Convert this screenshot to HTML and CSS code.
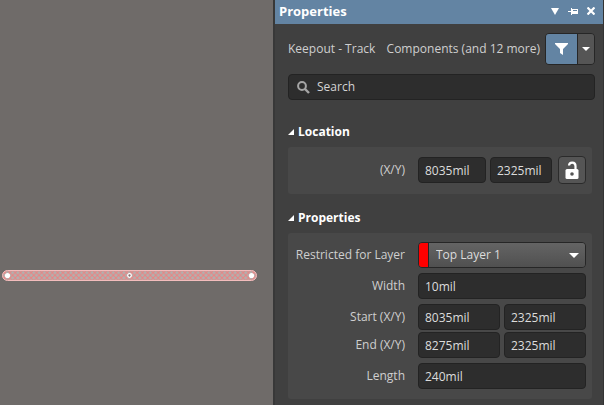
FILE: index.html
```
<!DOCTYPE html>
<html lang="en">

<head>
    <meta charset="UTF-8">
    <meta name="viewport" content="width=device-width, initial-scale=1.0">
    <title>Properties</title>
    <link rel="stylesheet" href="styles.css">
</head>

<body>
    <main class="canvas">
        <svg class="track" width="256" height="12" viewBox="0 0 256 12">
            <defs>
                <pattern id="hatch" width="5.300" height="5.300" patternUnits="userSpaceOnUse">
                    <rect width="5.300" height="5.300" fill="#b2b0ae" />
                    <path d="M0 0L5.300 5.300M5.300 0L0 5.300" stroke="#ee8080" stroke-width="0.900" />
                </pattern>
            </defs>
            <rect x="0.5" y="0.5" width="254" height="10" rx="5" fill="url(#hatch)" stroke="#f3bcbc" />
            <circle cx="5.5" cy="5.5" r="2.6" fill="#fff" />
            <circle cx="127.5" cy="5.5" r="1.8" fill="#8c6c6c" stroke="#fff" stroke-width="1.3" />
            <circle cx="249.5" cy="5.5" r="2.6" fill="#fff" />
        </svg>
    </main>

    <aside class="panel">
        <header class="panel-header">
            <h1>Properties</h1>
            <button class="header-btn" aria-label="Menu">
                <svg width="8" height="7" viewBox="0 0 8 7"><path d="M0 0H8L4 7Z" fill="#fff" /></svg>
            </button>
            <button class="header-btn" aria-label="Pin">
                <svg width="10" height="7" viewBox="0 0 10 7">
                    <path d="M0 3H3V4H0ZM3 0H4V7H3ZM4 1H10V6H4Z" fill="#fff" />
                    <path d="M5 2H9V3H5Z" fill="#6384a3" />
                </svg>
            </button>
            <button class="header-btn" aria-label="Close">
                <svg width="8" height="8" viewBox="0 0 8 8"><path d="M0.500 0.500L7.500 7.500M7.500 0.500L0.500 7.500" stroke="#fff" stroke-width="2.200" /></svg>
            </button>
        </header>

        <div class="panel-body">
            <div class="summary">
                <span>Keepout - Track</span>
                <span class="scope">Components (and 12 more)</span>
                <div class="filter">
                    <button class="filter-main" aria-label="Filter">
                        <svg width="13" height="12" viewBox="0 0 13 12"><path d="M0 0H13V1L8 6V12L5 10V6L0 1Z" fill="#fff" /></svg>
                    </button>
                    <button class="filter-more" aria-label="Filter options">
                        <svg width="8" height="4" viewBox="0 0 8 4"><path d="M0 0H8L4 4Z" fill="#fff" /></svg>
                    </button>
                </div>
            </div>

            <label class="search">
                <svg width="13" height="13" viewBox="0 0 13 13">
                    <circle cx="5" cy="5" r="3.9" fill="none" stroke="#a5a5a5" stroke-width="2" />
                    <path d="M8 8L12 12" stroke="#a5a5a5" stroke-width="2.4" />
                </svg>
                <input type="text" placeholder="Search" aria-label="Search">
            </label>

            <section>
                <h2><svg width="6" height="6" viewBox="0 0 6 6"><path d="M6 0V6H0Z" fill="#fff" /></svg>Location</h2>
                <div class="group">
                    <div class="row">
                        <label for="locX">(X/Y)</label>
                        <div class="fields location">
                            <input type="text" id="locX" value="8035mil">
                            <input type="text" value="2325mil" aria-label="Location Y">
                            <button class="lock" aria-label="Lock">
                                <svg width="14" height="18" viewBox="0 0 14 18">
                                    <path d="M4 4.5C4.300 0.500 10.500 0.500 10.500 5V9" fill="none" stroke="#fff" stroke-width="2.200" />
                                    <rect x="0.5" y="8" width="13" height="10" rx="1.5" fill="#fff" />
                                    <circle cx="7" cy="13" r="1.800" fill="#555" />
                                </svg>
                            </button>
                        </div>
                    </div>
                </div>
            </section>

            <section>
                <h2><svg width="6" height="6" viewBox="0 0 6 6"><path d="M6 0V6H0Z" fill="#fff" /></svg>Properties</h2>
                <div class="group">
                    <div class="row">
                        <label for="layer">Restricted for Layer</label>
                        <div class="layer">
                            <span class="swatch"></span>
                            <select id="layer">
                                <option>Top Layer 1</option>
                            </select>
                            <svg class="caret" width="10" height="5" viewBox="0 0 10 5"><path d="M0 0H10L5 5Z" fill="#fff" /></svg>
                        </div>
                    </div>
                    <div class="row">
                        <label for="width">Width</label>
                        <div class="fields">
                            <input type="text" id="width" value="10mil">
                        </div>
                    </div>
                    <div class="pair">
                        <div class="row">
                            <label for="startX">Start (X/Y)</label>
                            <div class="fields">
                                <input type="text" id="startX" value="8035mil">
                                <input type="text" value="2325mil" aria-label="Start Y">
                            </div>
                        </div>
                        <div class="row">
                            <label for="endX">End (X/Y)</label>
                            <div class="fields">
                                <input type="text" id="endX" value="8275mil">
                                <input type="text" value="2325mil" aria-label="End Y">
                            </div>
                        </div>
                    </div>
                    <div class="row">
                        <label for="length">Length</label>
                        <div class="fields">
                            <input type="text" id="length" value="240mil">
                        </div>
                    </div>
                </div>
            </section>
        </div>
    </aside>
</body>

</html>
```

FILE: styles.css
```
* {
    box-sizing: border-box;
}

body {
    display: flex;
    min-height: 100vh;
    margin: 0;
    background-color: #6f6b69;
    color: #cfcfcf;
    font-family: "Open Sans", "Noto Sans", sans-serif;
    font-size: 12px;
    line-height: 16px;
}

button,
input,
select {
    min-width: 0;
    margin: 0;
    font: inherit;
    color: #dcdcdc;
}

button {
    display: flex;
    align-items: center;
    justify-content: center;
    padding: 0;
    border: 0;
    background: none;
}

svg {
    display: block;
    flex: none;
}

.canvas {
    position: relative;
    flex: 1;
}

.track {
    position: absolute;
    left: 2px;
    top: 270px;
}

.panel {
    width: 331px;
    border-left: 2px solid #383838;
    border-right: 1px solid #333;
    background-color: #404040;
}

.panel-header {
    display: flex;
    align-items: center;
    gap: 9px;
    height: 24px;
    padding: 0 8px 2px 4px;
    background-color: #6384a3;
}

h1 {
    flex: 1;
    margin: 0;
    font-size: 13px;
    color: #fff;
}

.panel-body {
    padding: 9px 8px 6px 13px;
}

.summary {
    display: flex;
    align-items: center;
    white-space: nowrap;
}

.scope {
    margin-left: auto;
}

.filter {
    display: flex;
    height: 32px;
    margin-left: 5px;
    border: 1px solid #262626;
    border-radius: 4px;
    overflow: hidden;
}

.filter-main {
    width: 31px;
    background-color: #6384a3;
}

.filter-more {
    width: 17px;
    border-left: 1px solid #262626;
    background-color: #555;
}

.search {
    display: flex;
    align-items: center;
    gap: 7px;
    height: 26px;
    margin-top: 9px;
    padding: 0 8px;
    border: 1px solid #232323;
    border-radius: 4px;
    background-color: #2d2d2d;
}

.search input {
    flex: 1;
    padding: 0;
    border: 0;
    outline: 0;
    background: none;
}

.search input::placeholder {
    color: #d4d4d4;
}

section {
    margin-right: 3px;
}

.search + section {
    margin-top: 24px;
}

section + section {
    margin-top: 16px;
}

h2 {
    display: flex;
    align-items: center;
    gap: 4px;
    margin: 0 0 7px;
    font-size: 12px;
    color: #fff;
}

.group {
    display: flex;
    flex-direction: column;
    gap: 5px;
    padding: 9px 6px 10px;
    border-radius: 3px;
    background-color: #484848;
}

.row {
    display: grid;
    grid-template-columns: 1fr 168px;
    align-items: center;
    gap: 13px;
}

.row label {
    text-align: right;
    white-space: nowrap;
}

.pair {
    display: flex;
    flex-direction: column;
    gap: 2px;
}

.fields {
    display: flex;
    align-items: center;
    gap: 4px;
}

.fields input {
    flex: 1;
    height: 26px;
    padding: 0 6px;
    border: 1px solid #232323;
    border-radius: 4px;
    background-color: #2d2d2d;
}

.location input:first-child {
    flex: 0 0 68px;
}

.lock {
    width: 28px;
    height: 28px;
    margin-left: 2px;
    border: 1px solid #2b2b2b;
    border-radius: 4px;
    background-color: #555;
}

.layer {
    position: relative;
    display: flex;
    height: 26px;
    border: 1px solid #262626;
    border-radius: 4px;
    overflow: hidden;
}

.swatch {
    width: 10px;
    border-right: 1px solid #262626;
    background-color: #f00;
}

.layer select {
    flex: 1;
    padding: 0 7px;
    border: 0;
    appearance: none;
    background: linear-gradient(#646464, #505050);
}

.caret {
    position: absolute;
    right: 6px;
    top: 10px;
    pointer-events: none;
}
```
